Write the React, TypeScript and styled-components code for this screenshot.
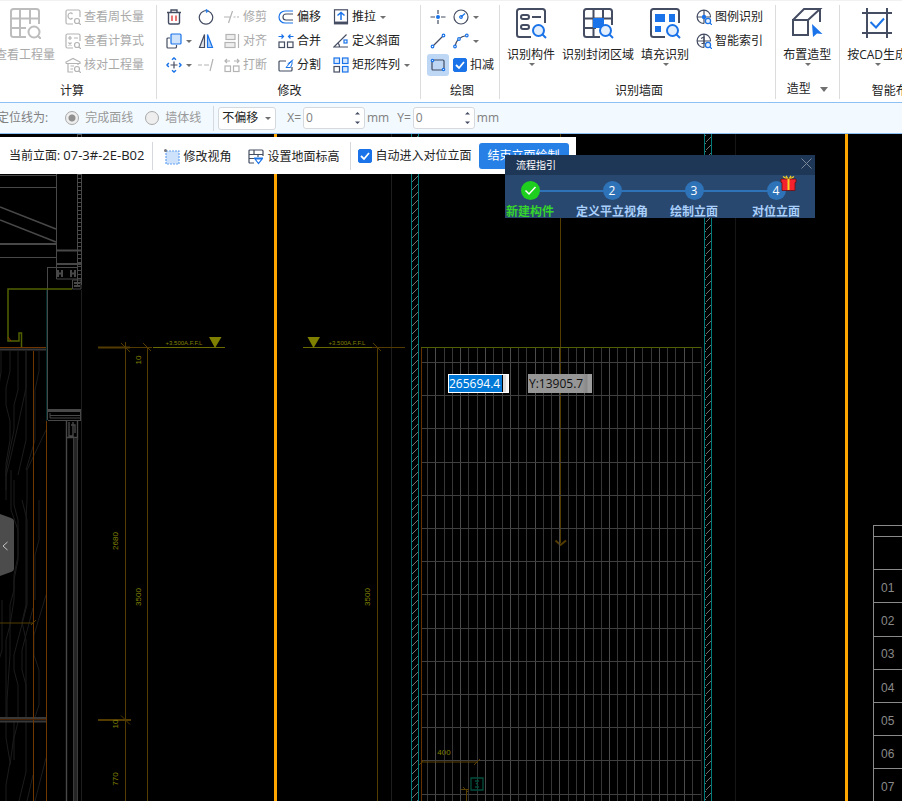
import React from 'react';
import styled, { createGlobalStyle } from 'styled-components';

const GlobalStyle = createGlobalStyle`
  *, *::before, *::after { box-sizing: border-box; }
  body {
    margin: 0;
    background: #000;
    color: #222;
    font: 12px/16px "Open Sans", "Noto Sans CJK SC", sans-serif;
  }
  button, input, select { font: inherit; color: inherit; }
`;

const BLUE = '#1a73e8';
const INK = '#454d63';
const MUTED = '#b4b4b4';

/* ---------- layout ---------- */

const Page = styled.div`
  display: flex;
  flex-direction: column;
  min-height: 100vh;
  overflow: hidden;
`;

const Ribbon = styled.header`
  display: flex;
  padding: 4px 0 3px;
  overflow: hidden;
  background: #fff;
  border-top: 1px solid #f1f1f1;
  border-bottom: 1px solid #8fc0f5;
`;

const Group = styled.section<{ $pad?: string; $shift?: number; $min?: number }>`
  flex: none;
  display: flex;
  flex-direction: column;
  justify-content: space-between;
  height: 94px;
  min-width: ${p => p.$min ?? 0}px;
  margin-left: ${p => p.$shift ?? 0}px;
  padding: ${p => p.$pad ?? '0 7px'};
  border-right: 1px solid #dcdcdc;
`;

const GroupBody = styled.div<{ $gap?: number }>`
  display: flex;
  gap: ${p => p.$gap ?? 7}px;
`;

const GroupName = styled.div<{ $indent?: number }>`
  display: flex;
  align-items: center;
  justify-content: center;
  gap: 8px;
  padding-left: ${p => p.$indent ?? 0}px;
`;

const ToolGrid = styled.div<{ $cols: string }>`
  display: grid;
  grid-template-columns: ${p => p.$cols};
  grid-auto-rows: 24px;
  align-items: center;
`;

const PlainButton = styled.button`
  border: 0;
  padding: 0;
  background: none;
  white-space: nowrap;
  &:disabled { color: #a9a9a9; }
`;

const Tool = styled(PlainButton)<{ $active?: boolean }>`
  display: flex;
  align-items: center;
  justify-self: start;
  gap: 3px;
  padding: ${p => (p.$active ? '3px' : '0')};
  margin-left: ${p => (p.$active ? '-3px' : '0')};
  border-radius: 3px;
  background: ${p => (p.$active ? '#bdd7f5' : 'none')};
`;

const BigTool = styled(PlainButton)`
  display: flex;
  flex-direction: column;
  align-items: center;
  padding-top: 2px;
  & > span { margin-top: 8px; }
`;

const CaretBox = styled.svg`
  flex: none;
  display: block;
  margin: 0 0 0 1px;
`;

const Caret = ({ wide }: { wide?: boolean }) => (
  <CaretBox width={wide ? 8 : 6} height={wide ? 5 : 3} viewBox="0 0 6 3" preserveAspectRatio="none">
    <path d="M0 0h6L3 3z" fill="#707070" />
  </CaretBox>
);

const IconSvg = styled.svg<{ $color?: string; $weight?: number }>`
  flex: none;
  display: block;
  fill: none;
  stroke: ${p => p.$color ?? INK};
  stroke-width: ${p => p.$weight ?? 1.2};
`;

const Small = ({ children, color }: { children: React.ReactNode; color?: string }) => (
  <IconSvg width="16" height="16" viewBox="0 0 16 16" $color={color}>{children}</IconSvg>
);
const Big = ({ children, color }: { children: React.ReactNode; color?: string }) => (
  <IconSvg width="32" height="32" viewBox="0 0 32 32" $color={color} $weight={2}>{children}</IconSvg>
);

/* ---------- icons ---------- */

const QuantityIcon = () => (
  <Big color="#bdbdbd">
    <path d="M30 17V4.500Q30 2 27.500 2H4.500Q2 2 2 4.500V27.500Q2 30 4.500 30H17M2 11.500H30M2 21H17M11 2V30M21 2V17" />
    <circle cx="25" cy="25" r="5.500" /><path d="M29 29l3 3" />
  </Big>
);
const PerimeterIcon = () => (
  <Small color={MUTED}>
    <path d="M15 8V2.500Q15 1 13.500 1H2.500Q1 1 1 2.500V13.500Q1 15 2.500 15H8M7.500 5Q6.500 3.800 5 4Q3 4.500 3 7T5 10Q6.500 10.200 7.500 9" />
    <circle cx="12" cy="12" r="2.500" /><path d="M14 14l2 2" />
  </Small>
);
const FormulaIcon = () => (
  <Small color={MUTED}>
    <path d="M15 8V2.500Q15 1 13.500 1H2.500Q1 1 1 2.500V13.500Q1 15 2.500 15H8M3 5H7M5 3V7M9 5H13M3.500 9.500L6.500 12.500M6.500 9.500L3.500 12.500" />
    <circle cx="12" cy="12" r="2.500" /><path d="M14 14l2 2" />
  </Small>
);
const CheckQuantityIcon = () => (
  <Small color={MUTED}>
    <path d="M1 6.500V5L8 1.500L15 5V6.500H1M3 6.500V15H8M13 6.500V8M5.500 9H9M5.500 12H8" />
    <circle cx="12" cy="12" r="2.500" /><path d="M14 14l2 2" />
  </Small>
);
const TrashIcon = () => (
  <Small>
    <path d="M1 3.500H15M5 3V1H11V3M2.500 4V13.500Q2.500 15 4 15H12Q13.500 15 13.500 13.500V4" strokeWidth="1.400" />
    <path d="M6 6.500V12M10 6.500V12" stroke="#e23b3b" strokeWidth="1.400" />
  </Small>
);
const RotateIcon = () => (
  <Small>
    <path d="M10 2A6.700 6.700 0 1 1 6 2" /><path d="M6 2A6.700 6.700 0 0 1 8.500 1.500" />
    <path d="M8 0.300L10.500 1.800L8.500 3.800z" fill={BLUE} stroke={BLUE} strokeWidth="0.600" />
  </Small>
);
const CopyIcon = () => (
  <Small><path d="M4 5H2Q1 5 1 6V14Q1 15 2 15H9Q10.500 15 10.500 14V12" /><rect x="5" y="1" width="10" height="10" rx="1" fill="#cfe2fb" stroke={BLUE} /></Small>
);
const MirrorIcon = () => (
  <Small><path d="M6.500 1.500V14.500H1.500z" fill="#e4e6ea" /><path d="M9.500 1.500V14.500H14.500z" fill="#a9ccf8" stroke={BLUE} /></Small>
);
const MoveIcon = () => (
  <Small>
    <path d="M8 4.500V11.500M4.500 8H11.500" />
    <g stroke={BLUE} strokeWidth="1.500"><path d="M6 2.800L8 1L10 2.800M6 13.200L8 15L10 13.200M2.800 6L1 8L2.800 10M13.200 6L15 8L13.200 10" /></g>
  </Small>
);
const ExtendIcon = () => (
  <Small color={MUTED}><path d="M0 8H4M6 8H11M15 2L12 14" /></Small>
);
const TrimIcon = () => (
  <Small color={MUTED}><path d="M0 8H7M9.500 8H11.500M13 8H15M8.500 2L4.500 14" /></Small>
);
const AlignIcon = () => (
  <Small color={MUTED}><rect x="2" y="1.500" width="9" height="5" fill="#eee" /><rect x="1" y="9.500" width="10" height="5" fill="#eee" /><path d="M14.500 1V15" /></Small>
);
const BreakIcon = () => (
  <Small color={MUTED}><rect x="1" y="9" width="5.500" height="5.500" /><rect x="9.500" y="9" width="5.500" height="5.500" /><path d="M0.800 4H6M3 2L1 4L3 6M10 4H15M13 2L15 4L13 6" /></Small>
);
const OffsetIcon = () => (
  <Small><path d="M15 2H7A6 6 0 0 0 7 14H15" stroke={BLUE} /><path d="M15 5H8A3 3 0 0 0 8 11H15" /></Small>
);
const MergeIcon = () => (
  <Small><rect x="1" y="9" width="5.500" height="5.500" /><rect x="9.500" y="9" width="5.500" height="5.500" /><path d="M0.500 3.500H5M3.500 1.500L5.500 3.500L3.500 5.500M15.500 3.500H11M12.500 1.500L10.500 3.500L12.500 5.500" stroke={BLUE} /></Small>
);
const SplitIcon = () => (
  <Small><path d="M8 4H2Q1 4 1 5V13Q1 14 2 14H13Q14 14 14 13V10" /><path d="M15 2.500L8 10.500H12.500L14 7V3.500M13.500 4L9.500 7" stroke={BLUE} strokeWidth="1" /></Small>
);
const PushIcon = () => (
  <Small><rect x="1.500" y="0.800" width="13" height="14" /><path d="M1 13.800H15" strokeWidth="2.500" /><path d="M8 11V3.500M4.500 6.500L8 3.500L11.500 6.500" stroke={BLUE} strokeWidth="1.500" /></Small>
);
const SlopeIcon = () => (
  <Small><path d="M13.500 1.500L0.800 14H15M5 10Q6.500 11.500 6.500 14" /><rect x="11" y="7" width="3" height="3" stroke={BLUE} /></Small>
);
const ArrayIcon = () => (
  <Small><g fill="#dbe9fc" stroke={BLUE}><rect x="1" y="1" width="5.500" height="5.500" /><rect x="9.500" y="1" width="5.500" height="5.500" /><rect x="9.500" y="9.500" width="5.500" height="5.500" /></g><rect x="1" y="9.500" width="5.500" height="5.500" /></Small>
);
const PointIcon = () => (
  <Small><path d="M8 1V5M8 11V15M0.500 8H5M11 8H15.500" /><circle cx="8" cy="8" r="2" fill={BLUE} stroke="none" /></Small>
);
const CircleIcon = () => (
  <Small><circle cx="8" cy="8" r="7" /><path d="M8 8L12 4.500" stroke={BLUE} /><circle cx="8" cy="8" r="1.300" stroke={BLUE} /></Small>
);
const LineIcon = () => (
  <Small><path d="M3 13L13 3" /><g fill="#fff" stroke={BLUE}><circle cx="2.500" cy="13.500" r="1.300" /><circle cx="13.500" cy="2.500" r="1.300" /></g></Small>
);
const ArcIcon = () => (
  <Small><path d="M2 13Q4 4 13.500 2.500" /><g fill="#fff" stroke={BLUE}><circle cx="2" cy="13.500" r="1.300" /><circle cx="6" cy="6" r="1.300" /><circle cx="13.800" cy="2.500" r="1.300" /></g></Small>
);
const RectIcon = () => (
  <Small><rect x="2" y="3" width="12" height="10" rx="1" /><g fill="#fff" stroke={BLUE}><circle cx="2.500" cy="3.500" r="1.200" /><circle cx="13.500" cy="12.500" r="1.200" /></g></Small>
);
const Lens = () => (
  <g stroke={BLUE}><circle cx="23.500" cy="23.500" r="5.500" fill="#e3effd" /><path d="M27.500 27.500l3.500 3.500" /></g>
);
const ComponentIcon = () => (
  <Big><path d="M30 16V4.500Q30 2 27.500 2H4.500Q2 2 2 4.500V27.500Q2 30 4.500 30H16M17 10H26" /><rect x="6" y="8" width="8" height="4" rx="2" /><rect x="6" y="18" width="8" height="4" rx="2" /><Lens /></Big>
);
const RegionIcon = () => (
  <Big><path d="M30 18V4.500Q30 2 27.500 2H4.500Q2 2 2 4.500V27.500Q2 30 4.500 30H18M2 11.500H30M2 21H14M11.500 2V30M21 2V14" /><rect x="11" y="11" width="11" height="10" fill={BLUE} stroke="none" /><Lens /></Big>
);
const FillIcon = () => (
  <Big><path d="M30 16V4.500Q30 2 27.500 2H4.500Q2 2 2 4.500V27.500Q2 30 4.500 30H16" /><path d="M6 7H16V15H6zM20 7H26V15H20zM6 19H12V25H6z" fill={BLUE} stroke="none" /><Lens /></Big>
);
const LegendIcon = ({ filled }: { filled?: boolean }) => (
  <Small>
    <path d="M14.500 8A6.700 6.700 0 1 0 8 14.500M8 1V8M1 8H15M8 8V14.500" />
    {filled ? <circle cx="8" cy="8" r="2.200" fill={BLUE} stroke="none" /> : <path d="M5 5.500L8 4V10.500H5.500" />}
    <circle cx="12" cy="12" r="2.600" fill="#e3effd" stroke={BLUE} /><path d="M14 14l2 2" stroke={BLUE} />
  </Small>
);
const ShapeIcon = () => (
  <Big><path d="M2 13H17V28H2zM2 13L13 2H29L17 13M29 2V15M17 24V28" /><path d="M21 17L31.500 27L26 26.500L22 30z" fill={BLUE} stroke="none" /></Big>
);
const CadIcon = () => (
  <Big><path d="M6 1V31M26 1V31M1 6H31M1 26H31" /><path d="M9.500 15L15 20.500L23 11.500" stroke={BLUE} /></Big>
);
const ViewIcon = () => (
  <Small><rect x="2" y="2" width="13" height="13" fill="#cfe2fb" stroke="#67a4f2" strokeDasharray="2 1" /><circle cx="1.500" cy="1.500" r="1.500" fill="#777" stroke="none" /></Small>
);
const LevelIcon = () => (
  <Small><path d="M6 14H2Q1 14 1 13V2Q1 1 2 1H14Q15 1 15 2V7M1 5.500H15M1 9.500H6M6 1V5.500M10 5.500V8" /><path d="M6 9H15M7 10L10.500 14.500L14 10z" stroke={BLUE} /></Small>
);

/* ---------- form parts ---------- */

const CheckLabel = styled.label`
  display: flex;
  align-items: center;
  gap: 3px;
  white-space: nowrap;
`;
const CheckCell = styled.span`
  display: grid;
  & > * { grid-area: 1 / 1; }
`;
const CheckInput = styled.input`
  appearance: none;
  width: 14px;
  height: 14px;
  margin: 0;
  border: 1px solid ${BLUE};
  border-radius: 2px;
  &:checked { background: ${BLUE}; }
  &:not(:checked) + svg { visibility: hidden; }
`;
const Tick = styled.svg`
  pointer-events: none;
  fill: none;
  stroke: #fff;
  stroke-width: 1.8;
`;
const Check = ({ children }: { children: React.ReactNode }) => (
  <CheckLabel>
    <CheckCell>
      <CheckInput type="checkbox" defaultChecked />
      <Tick width="14" height="14" viewBox="0 0 14 14"><path d="M3 7L6 10L11 4" /></Tick>
    </CheckCell>
    {children}
  </CheckLabel>
);

const OptionBar = styled.div`
  display: flex;
  align-items: center;
  height: 31px;
  overflow: hidden;
  background: #f2f9ff;
  border-bottom: 1px solid #8fc0f5;
  color: #808080;
  white-space: nowrap;
`;
const OptionTitle = styled.span`
  margin: 0 17px 0 -3px;
`;
const RadioLabel = styled.label`
  display: flex;
  align-items: center;
  gap: 6px;
  margin-right: 12px;
  color: #999;
`;
const Radio = styled.input`
  appearance: none;
  width: 14px;
  height: 14px;
  margin: 0;
  border: 1px solid #a8a8a8;
  border-radius: 50%;
  background: #eee;
  &:checked { background: radial-gradient(circle, #909090 0 3px, #eee 4px); }
`;
const Divider = styled.span<{ $h: number }>`
  flex: none;
  width: 1px;
  height: ${p => p.$h}px;
  background: #d5d9dd;
`;
const SelectCell = styled.label`
  display: grid;
  align-items: center;
  width: 58px;
  margin: 0 11px 0 4px;
  & > * { grid-area: 1 / 1; }
  & > svg { justify-self: end; margin: 0 5px 0 0; pointer-events: none; }
`;
const Select = styled.select`
  appearance: none;
  width: 100%;
  height: 23px;
  padding: 0 3px;
  border: 1px solid #d5d9dd;
  border-radius: 3px;
  background: #fff;
  color: #222;
`;
const NumberLabel = styled.label`
  display: flex;
  align-items: center;
  gap: 2px;
  margin-right: 8px;
`;
const NumberBox = styled.span`
  display: flex;
  align-items: center;
  width: 62px;
  height: 22px;
  padding: 0 4px 0 2px;
  border: 1px solid #d5d9dd;
  border-radius: 3px;
  background: #fff;
`;
const NumberInput = styled.input`
  flex: 1;
  min-width: 0;
  padding: 0;
  border: 0;
  background: none;
`;
const NumberField = ({ name }: { name: string }) => (
  <NumberLabel>
    {name}=
    <NumberBox>
      <NumberInput defaultValue="0" />
      <svg width="5" height="14" viewBox="0 0 5 14"><path d="M0 3.500L2.500 1L5 3.500zM0 10.500L2.500 13L5 10.500z" fill="#454d63" /></svg>
    </NumberBox>
    mm
  </NumberLabel>
);

/* ---------- canvas overlays ---------- */

const Stage = styled.main`
  position: relative;
  flex: 1;
  min-height: 600px;
  padding-top: 3px;
`;
const Drawing = styled.svg`
  position: absolute;
  inset: 0;
  width: 100%;
  height: 100%;
  fill: none;
  font-family: "Liberation Sans", sans-serif;
`;
const ViewBar = styled.div`
  position: relative;
  display: flex;
  align-items: center;
  width: fit-content;
  height: 37px;
  padding: 0 7px 0 9px;
  background: #fff;
  white-space: nowrap;
`;
const ViewName = styled.span`
  margin-right: 8px;
`;
const ViewCode = styled.span`
  font-size: 13px;
`;
const ViewTools = styled.div`
  display: flex;
  gap: 17px;
  padding: 2px 11px 0;
`;
const CheckSlot = styled.div`
  padding: 0 7px;
`;
const FinishButton = styled(PlainButton)`
  height: 26px;
  padding: 0 9px;
  border-radius: 3px;
  background: #2680e6;
  color: #fff;
`;

const Guide = styled.aside`
  position: absolute;
  left: 505px;
  top: 21px;
  width: 310px;
  height: 63px;
  overflow: hidden;
  background: #28486f;
  color: #fff;
`;
const GuideHead = styled.div`
  display: flex;
  align-items: center;
  justify-content: space-between;
  height: 20px;
  padding: 0 3px 0 11px;
  background: #1f3757;
  font-size: 10px;
`;
const Steps = styled.ol`
  display: grid;
  grid-template-columns: repeat(4, 82px);
  margin: 6px 0 0 -16px;
  padding: 0;
  list-style: none;
`;
const Step = styled.li<{ $done?: boolean; $last?: boolean }>`
  position: relative;
  display: flex;
  flex-direction: column;
  align-items: center;
  gap: 4px;
  color: ${p => (p.$done ? '#35d52c' : '#a9cffa')};
  font-weight: 700;
  white-space: nowrap;
  &::before {
    content: '';
    display: ${p => (p.$last ? 'none' : 'block')};
    position: absolute;
    top: 9px;
    left: 50%;
    width: 100%;
    height: 2px;
    background: #2e72b8;
  }
`;
const Dot = styled.span<{ $done?: boolean }>`
  position: relative;
  z-index: 1;
  display: grid;
  place-items: center;
  width: 19px;
  height: 19px;
  border-radius: 50%;
  background: ${p => (p.$done ? '#1fcf1f' : '#2e72b8')};
  color: #fff;
  font-weight: 400;
`;
const Gift = styled.svg`
  position: absolute;
  z-index: 2;
  right: 20px;
  top: -6px;
`;
const CoordX = styled.input`
  position: absolute;
  left: 448px;
  top: 240px;
  width: 61px;
  height: 19px;
  padding: 0;
  border: 1px solid #fff;
  background: linear-gradient(90deg, #0078d7 0 53px, #000 53px 54px, #ddd 54px 57px, #f4f4f4 57px);
  color: #fff;
`;
const CoordY = styled.input`
  position: absolute;
  left: 528px;
  top: 240px;
  width: 64px;
  height: 19px;
  padding: 0 1px;
  border: 0;
  background: linear-gradient(90deg, #969696 0 54px, #888 59px, #9d9d9d 60px);
  color: #111;
`;
const Handle = styled.button`
  position: absolute;
  left: 0;
  top: 380px;
  width: 14px;
  height: 62px;
  padding: 0;
  border: 0;
  background: none;
  & > svg { display: block; }
`;

/* ---------- CAD drawing, in sheet units ---------- */

const range = (n: number) => Array.from({ length: n }, (_, i) => i);
const WALLS = [411, 704];
const DIMS: [string, number, number][] = [
  ['10', 141, 360], ['2680', 118, 541], ['3500', 141, 597], ['10', 118, 724], ['770', 118, 779], ['3500', 370, 597],
];
const GRAIN = [
  'M1 351V372L-2 392', 'M10 351V371L6 388V405L10 421V440L6 463V490',
  'M18 351V390L14 405V430L10 450L6 470V500', 'M26 351V388L18 425L10 460L6 476',
  'M26 351V440L18 475', 'M39 351V371L35 390V440L26 470', 'M46 430L27 470V500L26 520V605L22 622L26 640V717',
  'M11 470V510L18 530V560L14 580V590L10 605V625L6 640V717', 'M2 600V650L-1 660', 'M14 480V505L18 520V556L14 575V600L10 625V655L7 700V717',
  'M22 500L27 520V605L14 655V670L18 685V717', 'M46 595L34 635V655L39 670V705L35 717',
  'M33 608L22 650V670L26 685V717', 'M39 500V540L35 555V600', 'M6 722V738L10 762L6 785V801',
  'M14 722V735L10 765M18 722L14 738V760', 'M26 722V772L19 801', 'M46 758L35 801', 'M33 775L27 801',
];

const Sheet = () => (
  <Drawing viewBox="0 134 902 667" preserveAspectRatio="xMinYMin slice">
    <defs>
      <pattern id="hatch" width="7" height="8" patternUnits="userSpaceOnUse" x="412" y="134">
        <path d="M0 8L7 1M-1 1L1 -1" stroke="#707070" />
      </pattern>
    </defs>

    <g stroke="#1c1c1c">{GRAIN.map(d => <path key={d} d={d} />)}</g>

    <g stroke="#484848">
      <path d="M0 175.500H56M0 187.500H56M56.500 174V265M0 257.500H56" />
      <path d="M0 207L56 229M0 220L56 242" strokeWidth="1.600" />
      <path d="M0 244H56M56 250.500H81M56 264H81" strokeWidth="2" />
      <path d="M77.500 134V285M81.500 134V285M47 267.500H77M47.500 267V420M56.500 265V279H78M72.500 280V289H81V280z" />
      <path d="M79.500 134V285" strokeWidth="3" strokeDasharray="1 3" />
      <path d="M58 270v7M62 270v7M71 270v7M75 270v7M57 273.500h5M70 273.500h6M74 283h6M74 286h6" strokeWidth="2" />
      <path d="M48 420.500H81M50 413v5h31M50 415.500H81M80.500 410v11" />
      <path d="M48 410.500H81" strokeWidth="3" />
      <path d="M66.500 421V801M67 437.500h10M77.500 421v19M69 422v14h4v-14M71 425h4v8" strokeWidth="1.400" />
    </g>
    <path d="M75.500 438V801" stroke="#252525" strokeWidth="5" />
    <path d="M73.500 438V801M77.500 438V801" stroke="#3c3c3c" />
    <path d="M81.500 290V801M391.500 134V801" stroke="#1e1e1e" />
    <path d="M735.500 134V801" stroke="#161616" />
    <path d="M0 349.500H46M0 718H46M0 721.500H46" stroke="#383838" strokeWidth="2" />
    <path d="M46.500 290V717" stroke="#002b28" />
    <path d="M0 347.500H46M33.500 351V801M46.500 421V801" stroke="#703600" />
    <path d="M0 719.500H46" stroke="#442000" />
    <path d="M72 289H8V341H19V333H21.500V347" stroke="#516000" strokeWidth="1.500" />
    <path d="M8 337l3 4" stroke="#904000" />

    <g stroke="#543c00">
      <path d="M98 347.500H130M98 720H131" strokeWidth="2" />
      <path d="M125.500 342V801M147.500 347V801M377.500 347V801M130 347.500H152M372 347.500H405M0 623H33M31 625l5 -5" />
      <path d="M121 343l9 9M143 343l8 8M121 715.500l9 9M373 343l8 8" />
      <path d="M560.500 134V543" />
      <path d="M555.500 540.500L560.500 545L566 540.500" strokeWidth="2" />
    </g>
    <g stroke="#6a6a00"><path d="M153 347.500H225M303 347.500H372" /></g>
    <path d="M209 337H221.500L215 348zM307.500 337H320L313.500 348z" fill="#808000" />
    <g fill="#808000" fontSize="8" textAnchor="middle">
      <text x="184" y="345" fontSize="6">+3.500A.F.F.L</text>
      <text x="347" y="345" fontSize="6">+3.500A.F.F.L</text>
      <text x="444" y="755">400</text>
      {DIMS.map(([t, x, y]) => (
        <text key={t + x + y} transform={`translate(${x} ${y}) rotate(-90)`}>{t}</text>
      ))}
    </g>

    <path d="M275.500 134V801M846.500 134V801" stroke="#ffa500" strokeWidth="3" />

    {WALLS.map(x => (
      <g key={x}>
        <rect x={x + 1} y="134" width="6" height="667" fill="url(#hatch)" />
        <path d={`M${x + 0.5} 134V801M${x + 7.5} 134V801`} stroke="#007a7a" />
      </g>
    ))}

    {range(33).map(i => (
      <path key={i} d={`M${Math.round(427 + i * 8.28) + 0.5} 348V801`} stroke={i % 3 === 1 ? '#4c4c4c' : '#363636'} />
    ))}
    {range(14).map(i => (
      <path key={i} d={`M422 ${Math.round(362 + i * 33.2) + 0.5}H701`} stroke="#404040" />
    ))}
    <path d="M701.500 347V801" stroke="#282828" />
    <path d="M421.500 347V801" stroke="#633000" />
    <path d="M421 347.500H701" stroke="#516000" />
    <path d="M421 762H478M419 765l5 -5M474 765l6 -6M461 789.500h8M463 787l5 5M466.500 791V801" stroke="#5a4000" />
    <path d="M471 778H483V790H471zM475 781h4M475 787h4M476 783l2 2" stroke="#004d3b" strokeWidth="1.300" />

    <path d="M873.500 525V801M873 525.500H902" stroke="#8a8a8a" />
    {range(8).map(i => (
      <path key={i} d={`M873 ${Math.round(536 + i * 33.2) + 0.5}H902`} stroke="#8a8a8a" />
    ))}
    <g fill="#8a8a8a" fontSize="12">
      {range(7).map(i => <text key={i} x="881" y={Math.round(592 + i * 33.2)}>{`0${i + 1}`}</text>)}
    </g>
  </Drawing>
);

const STEPS = ['新建构件', '定义平立视角', '绘制立面', '对位立面'];

export default function App() {
  return (
    <Page>
      <GlobalStyle />
      <Ribbon>
        <Group $shift={-12} $pad="0 12px 0 7px">
          <GroupBody $gap={10}>
            <BigTool disabled><QuantityIcon /><span>查看工程量</span></BigTool>
            <ToolGrid $cols="auto">
              <Tool disabled><PerimeterIcon />查看周长量</Tool>
              <Tool disabled><FormulaIcon />查看计算式</Tool>
              <Tool disabled><CheckQuantityIcon />核对工程量</Tool>
            </ToolGrid>
          </GroupBody>
          <GroupName $indent={5}>计算</GroupName>
        </Group>

        <Group $pad="0 10px 0 9px">
          <ToolGrid $cols="32px 26px 54px 55px auto">
            <Tool aria-label="删除"><TrashIcon /></Tool>
            <Tool aria-label="旋转"><RotateIcon /></Tool>
            <Tool disabled><TrimIcon />修剪</Tool>
            <Tool><OffsetIcon />偏移</Tool>
            <Tool><PushIcon />推拉<Caret /></Tool>
            <Tool aria-label="复制"><CopyIcon /><Caret /></Tool>
            <Tool aria-label="镜像"><MirrorIcon /></Tool>
            <Tool disabled><AlignIcon />对齐</Tool>
            <Tool><MergeIcon />合并</Tool>
            <Tool><SlopeIcon />定义斜面</Tool>
            <Tool aria-label="移动"><MoveIcon /><Caret /></Tool>
            <Tool aria-label="延伸" disabled><ExtendIcon /></Tool>
            <Tool disabled><BreakIcon />打断</Tool>
            <Tool><SplitIcon />分割</Tool>
            <Tool><ArrayIcon />矩形阵列<Caret /></Tool>
          </ToolGrid>
          <GroupName $indent={3}>修改</GroupName>
        </Group>

        <Group $pad="0 5px 0 9px">
          <ToolGrid $cols="23px auto">
            <Tool aria-label="点"><PointIcon /></Tool>
            <Tool aria-label="圆"><CircleIcon /><Caret /></Tool>
            <Tool aria-label="直线"><LineIcon /></Tool>
            <Tool aria-label="弧"><ArcIcon /><Caret /></Tool>
            <Tool aria-label="矩形" $active><RectIcon /></Tool>
            <Check>扣减</Check>
          </ToolGrid>
          <GroupName>绘图</GroupName>
        </Group>

        <Group $pad="0 12px 0 7px">
          <GroupBody>
            <BigTool><ComponentIcon /><span>识别构件</span><Caret /></BigTool>
            <BigTool><RegionIcon /><span>识别封闭区域</span></BigTool>
            <BigTool><FillIcon /><span>填充识别</span><Caret /></BigTool>
            <ToolGrid $cols="auto">
              <Tool><LegendIcon filled />图例识别</Tool>
              <Tool><LegendIcon />智能索引</Tool>
            </ToolGrid>
          </GroupBody>
          <GroupName $indent={8}>识别墙面</GroupName>
        </Group>

        <Group $pad="0 8px 2px 7px">
          <GroupBody><BigTool><ShapeIcon /><span>布置造型</span><Caret /></BigTool></GroupBody>
          <GroupName>造型<Caret wide /></GroupName>
        </Group>

        <Group $min={112}>
          <GroupBody><BigTool><CadIcon /><span>按CAD生成</span><Caret /></BigTool></GroupBody>
          <GroupName>智能布置</GroupName>
        </Group>
      </Ribbon>

      <OptionBar>
        <OptionTitle>定位线为:</OptionTitle>
        <RadioLabel><Radio type="radio" name="line" defaultChecked />完成面线</RadioLabel>
        <RadioLabel><Radio type="radio" name="line" />墙体线</RadioLabel>
        <Divider $h={25} />
        <SelectCell>
          <Select aria-label="偏移方式" defaultValue="none"><option value="none">不偏移</option></Select>
          <Caret />
        </SelectCell>
        <NumberField name="X" />
        <NumberField name="Y" />
      </OptionBar>

      <Stage>
        <Sheet />
        <ViewBar>
          <ViewName>当前立面: <ViewCode>07-3#-2E-B02</ViewCode></ViewName>
          <Divider $h={28} />
          <ViewTools>
            <Tool><ViewIcon />修改视角</Tool>
            <Tool><LevelIcon />设置地面标高</Tool>
          </ViewTools>
          <Divider $h={28} />
          <CheckSlot><Check>自动进入对位立面</Check></CheckSlot>
          <FinishButton>结束立面绘制</FinishButton>
        </ViewBar>

        <Guide>
          <GuideHead>
            流程指引
            <PlainButton aria-label="关闭">
              <svg width="11" height="11" viewBox="0 0 11 11"><path d="M0.500 0.500l10 10M10.500 0.500l-10 10" stroke="#7b8796" /></svg>
            </PlainButton>
          </GuideHead>
          <Steps>
            {STEPS.map((name, i) => (
              <Step key={name} $done={i === 0} $last={i === 3}>
                <Dot $done={i === 0}>
                  {i === 0 ? (
                    <svg width="13" height="11" viewBox="0 0 13 11"><path d="M1.500 5.500L5 9L11.500 2" fill="none" stroke="#fff" strokeWidth="1.500" /></svg>
                  ) : i + 1}
                </Dot>
                {name}
                {i === 3 && (
                  <Gift width="17" height="17" viewBox="0 0 17 17">
                    <path d="M8.500 5L3 1.500M8.500 5L6 0.800M8.500 5L11 0.800M8.500 5L14 1.500" stroke="#f5d327" strokeWidth="1.300" />
                    <path d="M1 4H16V7.500H15V15.500H2V7.500H1z" fill="#f5222d" stroke="#6b1013" strokeWidth="0.800" />
                    <path d="M7.500 4H9.500V15H7.500z" fill="#f5d327" />
                  </Gift>
                )}
              </Step>
            ))}
          </Steps>
        </Guide>

        <CoordX aria-label="X" defaultValue="265694.4" />
        <CoordY aria-label="Y" defaultValue="Y:13905.7" />
        <Handle aria-label="展开面板">
          <svg width="14" height="62" viewBox="0 0 14 62">
            <path d="M0 0L11 4Q14 5 14 7V55Q14 57 11 58L0 62z" fill="#4c4c4c" />
            <path d="M7.500 28L3 32L7.500 36" fill="none" stroke="#c4c4c4" />
          </svg>
        </Handle>
      </Stage>
    </Page>
  );
}
